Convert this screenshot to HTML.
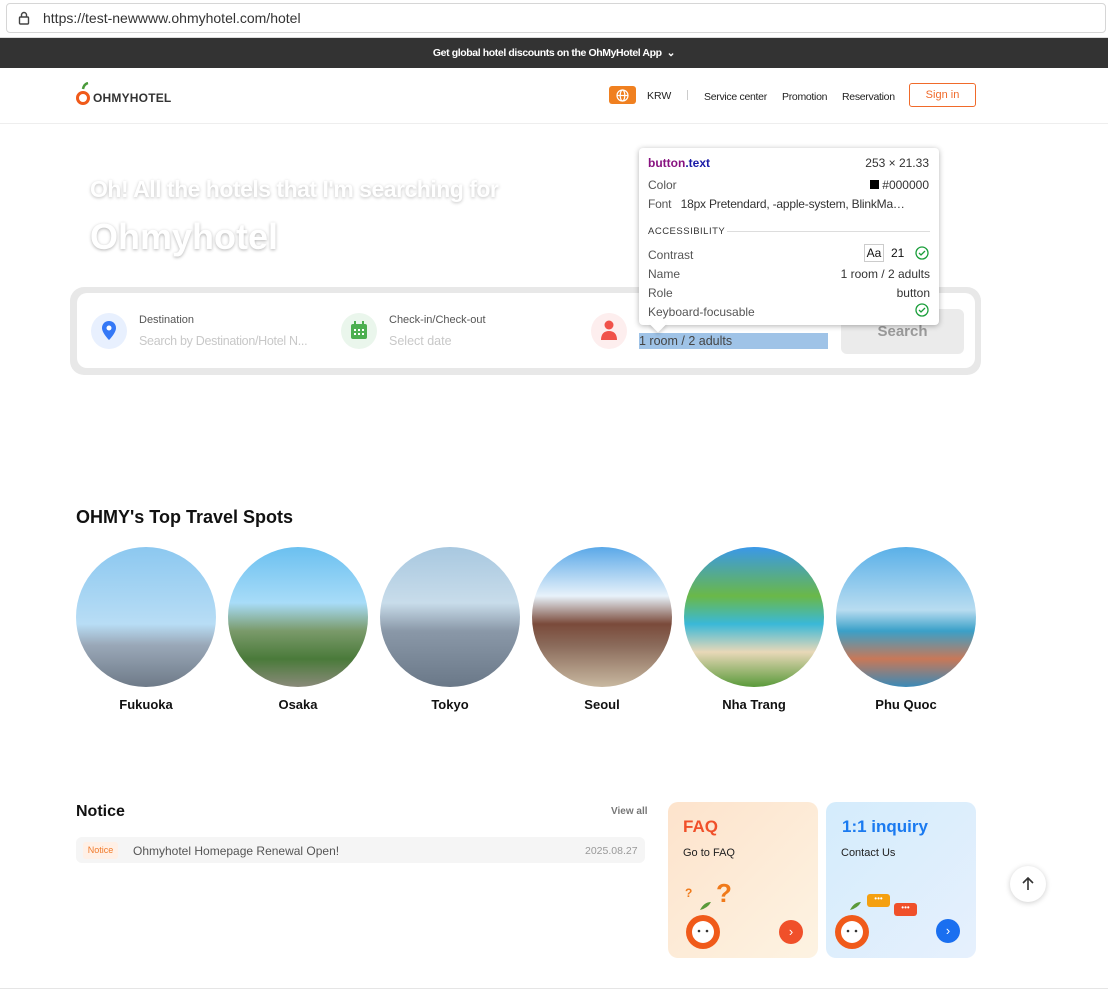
<!DOCTYPE html>
<html><head><meta charset="utf-8"><style>
*{box-sizing:border-box;margin:0;padding:0}
body{width:1108px;height:989px;overflow:hidden;background:#fff;font-family:"Liberation Sans",sans-serif;position:relative;color:#111}
.abs{position:absolute}
.url{top:0;left:0;width:1108px;height:38px;background:#fff;border-bottom:1px solid #ddd}
.url .bar{position:absolute;left:6px;top:3px;width:1100px;height:30px;border:1px solid #d6d6d6;border-radius:4px}
.url span{position:absolute;left:43px;top:10px;font-size:14px;color:#333}
.promo{top:38px;left:0;width:1108px;height:30px;background:#333;color:#fff;font-size:10.5px;text-align:center;line-height:30px;font-weight:bold;letter-spacing:-.4px}
.hdr{top:68px;left:0;width:1108px;height:56px;border-bottom:1px solid #eee}
.nav{font-size:10.5px;color:#222;top:91px}
.circ{width:140px;height:140px;border-radius:50%;top:547px;overflow:hidden}
.lbl{top:697px;width:140px;text-align:center;font-size:13px;font-weight:bold}
</style></head><body>
<div class="abs url"><div class="bar"></div>
<svg class="abs" style="left:18px;top:11px" width="12" height="14" viewBox="0 0 12 14"><rect x="1.5" y="6" width="9" height="7" rx="1" fill="none" stroke="#444" stroke-width="1.4"/><path d="M3.5 6V4a2.5 2.5 0 015 0v2" fill="none" stroke="#444" stroke-width="1.4"/></svg>
<span>https://test-newwww.ohmyhotel.com/hotel</span></div>
<div class="abs promo">Get global hotel discounts on the OhMyHotel App &nbsp;⌄</div>
<div class="abs hdr"></div>
<svg class="abs" style="left:76px;top:82px" width="14" height="26" viewBox="0 0 14 26"><path d="M7 7 Q8 2 12 1" stroke="#4a9a3a" stroke-width="2.5" fill="none"/><circle cx="7" cy="16" r="5.5" fill="none" stroke="#f05a1a" stroke-width="3"/></svg>
<div class="abs" style="left:93px;top:91px;font-size:12px;font-weight:bold;letter-spacing:.2px;color:#333">OHMYHOTEL</div>
<div class="abs" style="left:609px;top:86px;width:27px;height:18px;background:#f08020;border-radius:3px"></div>
<svg class="abs" style="left:616px;top:89px" width="13" height="13" viewBox="0 0 13 13" fill="none" stroke="#fff" stroke-width="1.2"><circle cx="6.5" cy="6.5" r="5.5"/><ellipse cx="6.5" cy="6.5" rx="2.3" ry="5.5"/><path d="M1 6.5h11"/></svg>
<div class="abs nav" style="left:647px;top:90px">KRW</div>
<div class="abs" style="left:687px;top:90px;width:1px;height:10px;background:#ccc"></div>
<div class="abs nav" style="left:704px;letter-spacing:-.3px">Service center</div>
<div class="abs nav" style="left:782px;letter-spacing:-.3px">Promotion</div>
<div class="abs nav" style="left:842px;letter-spacing:-.3px">Reservation</div>
<div class="abs" style="left:909px;top:83px;width:67px;height:24px;border:1px solid #f06a2a;border-radius:3px;color:#f06a2a;font-size:11px;text-align:center;line-height:22px">Sign in</div>

<div class="abs" style="left:90px;top:176px;font-size:23px;font-weight:bold;color:#fff;text-shadow:0 1px 3px rgba(0,0,0,.25);letter-spacing:-.5px">Oh! All the hotels that I'm searching for</div>
<div class="abs" style="left:90px;top:216px;font-size:36px;font-weight:bold;color:#fff;text-shadow:0 1px 3px rgba(0,0,0,.3)">Ohmyhotel</div>

<div class="abs" style="left:70px;top:287px;width:911px;height:88px;background:#e8e8e8;border-radius:14px"></div>
<div class="abs" style="left:77px;top:293px;width:898px;height:75px;background:#fff;border-radius:10px"></div>
<div class="abs" style="left:91px;top:313px;width:36px;height:36px;border-radius:50%;background:#e8f0fe"></div>
<svg class="abs" style="left:102px;top:321px" width="14" height="19" viewBox="0 0 14 19"><path d="M7 0C3 0 0 3 0 7c0 5 7 12 7 12s7-7 7-12c0-4-3-7-7-7z" fill="#3478f6"/><circle cx="7" cy="7" r="2.5" fill="#fff"/></svg>
<div class="abs" style="left:139px;top:314px;font-size:11px;color:#555">Destination</div>
<div class="abs" style="left:139px;top:334px;font-size:12.5px;color:#c8c8c8;letter-spacing:-.3px">Search by Destination/Hotel N...</div>
<div class="abs" style="left:341px;top:313px;width:36px;height:36px;border-radius:50%;background:#eaf6ec"></div>
<svg class="abs" style="left:350px;top:321px" width="18" height="19" viewBox="0 0 18 19"><rect x="1" y="3" width="16" height="15" rx="2" fill="#4caf50"/><rect x="4" y="0" width="2" height="5" fill="#4caf50"/><rect x="12" y="0" width="2" height="5" fill="#4caf50"/><g fill="#fff"><rect x="4" y="8" width="2" height="2"/><rect x="8" y="8" width="2" height="2"/><rect x="12" y="8" width="2" height="2"/><rect x="4" y="12" width="2" height="2"/><rect x="8" y="12" width="2" height="2"/><rect x="12" y="12" width="2" height="2"/></g></svg>
<div class="abs" style="left:389px;top:314px;font-size:11px;color:#555">Check-in/Check-out</div>
<div class="abs" style="left:389px;top:334px;font-size:12.5px;color:#c8c8c8">Select date</div>
<div class="abs" style="left:591px;top:313px;width:36px;height:36px;border-radius:50%;background:#fdeeee"></div>
<svg class="abs" style="left:600px;top:320px" width="18" height="20" viewBox="0 0 18 20" fill="#f0524a"><circle cx="9" cy="5" r="4.5"/><path d="M1 20c0-6 3-9 8-9s8 3 8 9z"/></svg>
<div class="abs" style="left:639px;top:333px;width:189px;height:16px;background:#9fc3e7"></div>
<div class="abs" style="left:639px;top:334px;font-size:12.5px;color:#444">1 room / 2 adults</div>
<div class="abs" style="left:841px;top:309px;width:123px;height:45px;background:#ebebeb;border-radius:6px;color:#999;font-size:15px;font-weight:bold;text-align:center;line-height:45px">Search</div>

<div class="abs" style="left:639px;top:148px;width:300px;height:177px;background:#fff;border-radius:4px;box-shadow:0 1px 6px rgba(0,0,0,.3);font-size:12px;color:#333"></div>
<div class="abs" style="left:652px;top:318px;width:12px;height:12px;background:#fff;transform:rotate(45deg);box-shadow:2px 2px 3px rgba(0,0,0,.15)"></div>
<div class="abs" style="left:648px;top:156px;font-size:12px;font-weight:bold;color:#881280">button<span style="color:#1a1aa6">.text</span></div>
<div class="abs" style="right:179px;top:156px;font-size:12px;color:#333">253 × 21.33</div>
<div class="abs" style="left:648px;top:178px;font-size:12px;color:#555">Color</div>
<div class="abs" style="right:179px;top:178px;font-size:12px;color:#333"><span style="display:inline-block;width:9px;height:9px;background:#000;margin-right:3px"></span>#000000</div>
<div class="abs" style="left:648px;top:197px;font-size:12px;color:#555;letter-spacing:-.2px">Font&nbsp;&nbsp; <span style="color:#333">18px Pretendard, -apple-system, BlinkMa…</span></div>
<div class="abs" style="left:648px;top:226px;font-size:9.5px;color:#333;letter-spacing:.5px">ACCESSIBILITY</div>
<div class="abs" style="left:727px;top:231px;width:203px;height:1px;background:#ddd"></div>
<div class="abs" style="left:648px;top:246px;font-size:12px;color:#555;line-height:19px">Contrast<br>Name<br>Role<br>Keyboard-focusable</div>
<div class="abs" style="left:864px;top:244px;width:20px;height:18px;border:1px solid #ccc;font-size:12px;text-align:center;line-height:16px">Aa</div>
<div class="abs" style="left:891px;top:246px;font-size:12px">21</div>
<svg class="abs" style="left:915px;top:246px" width="14" height="14" viewBox="0 0 14 14" fill="none" stroke="#1a9e3a" stroke-width="1.3"><circle cx="7" cy="7" r="6"/><path d="M4 7l2 2 4-4"/></svg>
<div class="abs" style="right:178px;top:265px;font-size:12px;color:#333;text-align:right;line-height:19px">1 room / 2 adults<br>button</div>
<svg class="abs" style="left:915px;top:303px" width="14" height="14" viewBox="0 0 14 14" fill="none" stroke="#1a9e3a" stroke-width="1.3"><circle cx="7" cy="7" r="6"/><path d="M4 7l2 2 4-4"/></svg>

<div class="abs" style="left:76px;top:507px;font-size:18px;font-weight:bold">OHMY's Top Travel Spots</div>
<div class="abs circ" style="left:76px;background:linear-gradient(#8cc8f0 0%,#b8ddf5 55%,#9aa8b8 70%,#6e7a88 100%)"></div>
<div class="abs circ" style="left:228px;background:linear-gradient(#6bc0f0 0%,#a8dcf8 40%,#7a9a6a 60%,#4a7a3a 80%,#8a8a7a 100%)"></div>
<div class="abs circ" style="left:380px;background:linear-gradient(#a8c8e0 0%,#c8dcea 40%,#8a98a8 60%,#6a7888 100%)"></div>
<div class="abs circ" style="left:532px;background:linear-gradient(#5aa8e8 0%,#e8f2fa 35%,#7a4a3a 55%,#8a6a5a 70%,#c8b8a0 100%)"></div>
<div class="abs circ" style="left:684px;background:linear-gradient(#3a98e8 0%,#6ab848 35%,#3ab8d8 55%,#e8d8b8 75%,#5a9a3a 100%)"></div>
<div class="abs circ" style="left:836px;background:linear-gradient(#5ab0e8 0%,#b8dcf0 45%,#3aa0c8 60%,#c87858 80%,#3a8ab8 100%)"></div>
<div class="abs lbl" style="left:76px">Fukuoka</div>
<div class="abs lbl" style="left:228px">Osaka</div>
<div class="abs lbl" style="left:380px">Tokyo</div>
<div class="abs lbl" style="left:532px">Seoul</div>
<div class="abs lbl" style="left:684px">Nha Trang</div>
<div class="abs lbl" style="left:836px">Phu Quoc</div>

<div class="abs" style="left:76px;top:803px;font-size:16px;font-weight:bold">Notice</div>
<div class="abs" style="left:611px;top:806px;font-size:10px;font-weight:bold;color:#777">View all</div>
<div class="abs" style="left:76px;top:837px;width:569px;height:26px;background:#f5f5f5;border-radius:6px"></div>
<div class="abs" style="left:83px;top:842px;width:35px;height:17px;background:#fff0e6;border-radius:3px;font-size:9px;color:#f07a2a;text-align:center;line-height:17px">Notice</div>
<div class="abs" style="left:133px;top:844px;font-size:12px;color:#555">Ohmyhotel Homepage Renewal Open!</div>
<div class="abs" style="left:585px;top:845px;font-size:10.5px;color:#999">2025.08.27</div>

<div class="abs" style="left:668px;top:802px;width:150px;height:156px;border-radius:10px;background:linear-gradient(135deg,#fde3cc,#fdf3e2)"></div>
<div class="abs" style="left:683px;top:817px;font-size:17px;font-weight:bold;color:#f0502a">FAQ</div>
<div class="abs" style="left:683px;top:847px;font-size:11px;color:#222">Go to FAQ</div>
<div class="abs" style="left:716px;top:878px;font-size:26px;font-weight:bold;color:#f07a1a">?</div>
<div class="abs" style="left:685px;top:886px;font-size:12px;font-weight:bold;color:#f07a1a">?</div>
<svg class="abs" style="left:676px;top:898px" width="60" height="56" viewBox="0 0 60 56"><path d="M24 12 Q28 4 35 4 Q32 10 24 12z" fill="#5a9a3a"/><circle cx="27" cy="34" r="17" fill="#f05a1a"/><circle cx="27" cy="34" r="11" fill="#fff"/><circle cx="23" cy="33" r="1.3" fill="#333"/><circle cx="31" cy="33" r="1.3" fill="#333"/></svg>
<div class="abs" style="left:779px;top:920px;width:24px;height:24px;border-radius:50%;background:#f0502a;color:#fff;font-size:13px;text-align:center;line-height:23px">›</div>

<div class="abs" style="left:826px;top:802px;width:150px;height:156px;border-radius:10px;background:linear-gradient(135deg,#d4ecfc,#e6f0fd)"></div>
<div class="abs" style="left:842px;top:817px;font-size:17px;font-weight:bold;color:#1a7af0">1:1 inquiry</div>
<div class="abs" style="left:841px;top:847px;font-size:11px;color:#222">Contact Us</div>
<div class="abs" style="left:867px;top:894px;width:23px;height:13px;background:#f5a010;border-radius:3px;color:#fff;font-size:8px;text-align:center;line-height:10px">•••</div>
<div class="abs" style="left:894px;top:903px;width:23px;height:13px;background:#f0502a;border-radius:3px;color:#fff;font-size:8px;text-align:center;line-height:10px">•••</div>
<svg class="abs" style="left:830px;top:898px" width="60" height="56" viewBox="0 0 60 56"><path d="M20 12 Q24 4 31 4 Q28 10 20 12z" fill="#5a9a3a"/><circle cx="22" cy="34" r="17" fill="#f05a1a"/><circle cx="22" cy="34" r="11" fill="#fff"/><circle cx="18" cy="33" r="1.3" fill="#333"/><circle cx="26" cy="33" r="1.3" fill="#333"/></svg>
<div class="abs" style="left:936px;top:919px;width:24px;height:24px;border-radius:50%;background:#1a6ff0;color:#fff;font-size:13px;text-align:center;line-height:23px">›</div>

<div class="abs" style="left:1010px;top:866px;width:36px;height:36px;border-radius:50%;background:#fff;box-shadow:0 1px 6px rgba(0,0,0,.2)"></div>
<svg class="abs" style="left:1021px;top:877px" width="14" height="14" viewBox="0 0 14 14" fill="none" stroke="#333" stroke-width="1.6"><path d="M7 13V1M2 6l5-5 5 5"/></svg>
<div class="abs" style="left:0;top:988px;width:1108px;height:1px;background:#e5e5e5"></div>
</body></html>
